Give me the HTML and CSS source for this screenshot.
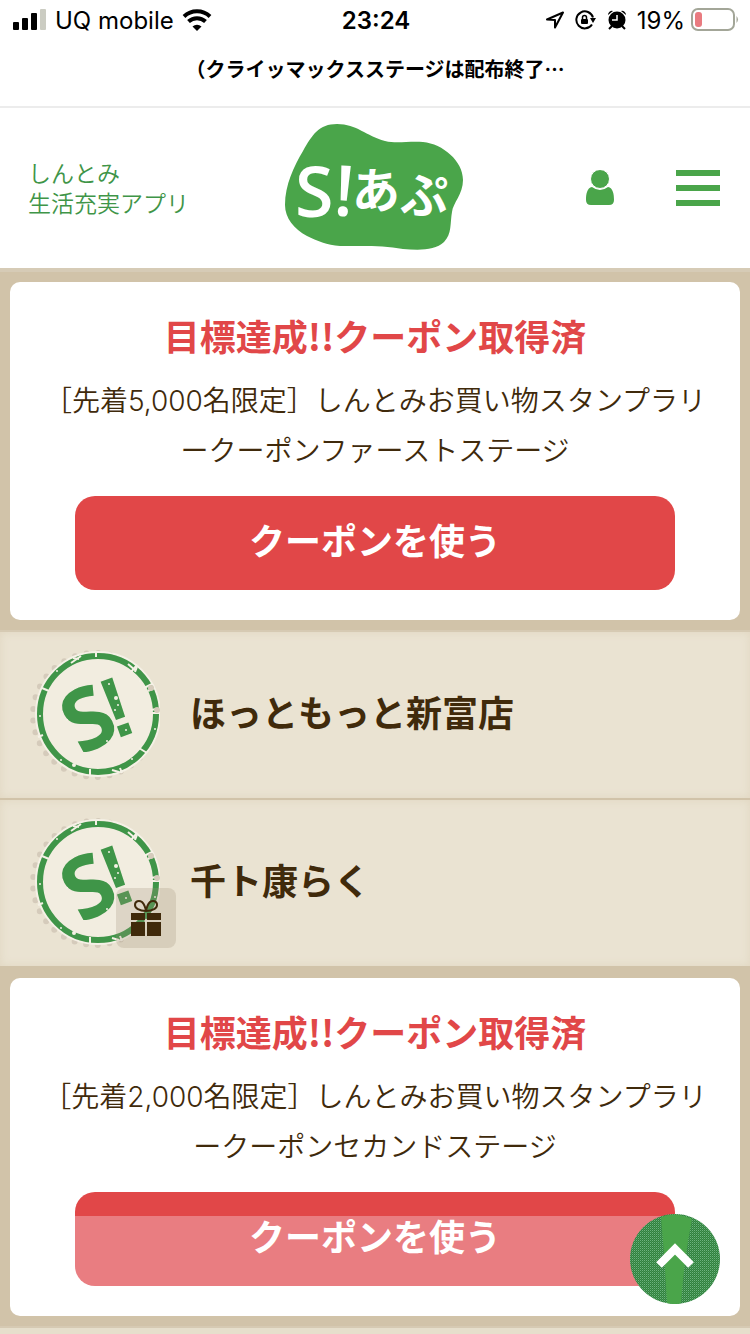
FILE: index.html
```html
<!DOCTYPE html>
<html lang="ja">
<head>
  <meta charset="UTF-8">
  <meta name="viewport" content="width=device-width, initial-scale=1.0">
  <title>S!あぷ スタンプラリー</title>
  <link rel="stylesheet" href="styles.css">
</head>
<body>
  <!-- Shared shapes -->
  <svg class="defs" width="0" height="0" aria-hidden="true">
    <symbol id="stamp" viewBox="0 0 130 130">
      <circle cx="66" cy="64" r="59" fill="#f5f1e6" opacity="0.7"/>
      <circle cx="65" cy="65" r="62" fill="none" stroke="#d5cbbb" stroke-width="6" stroke-linecap="round" stroke-dasharray="0 11.8"/>
      <circle cx="68" cy="64" r="62" fill="none" stroke="#f5f1e6" stroke-width="2"/>
      <circle cx="68" cy="64" r="58" fill="none" stroke="#3f9548" stroke-width="6"/>
      <!-- worn spots in the ring -->
      <g fill="none" stroke="#f5f1e6" stroke-width="2">
        <path d="M114 38l8-4M118 41l6-3M122 63h8M126 59l-5 1M12 38l7 3M109 98l8 5M41 13l10-7M43 8l6 1M98 14l8 7M101 22l6-7M107 17l-2 5M60 119v6M82 120l7 2M90 118l2 5M66 3v4M8 87l5-2"/>
      </g>
      <g fill="#f5f1e6">
        <circle cx="10" cy="66" r="1"/><circle cx="31" cy="110" r="1"/><circle cx="44" cy="115" r="2"/><circle cx="110" cy="31" r="1"/><circle cx="27" cy="21" r="1"/><circle cx="102" cy="109" r="1"/><circle cx="125" cy="79" r="1"/>
      </g>
      <circle cx="121" cy="38" r="3" fill="#d5cbbb"/>
      <circle cx="127" cy="60" r="3" fill="#d5cbbb"/>
      <g class="stamp-text">
        <text class="stamp-s" x="0" y="30" transform="translate(58 69) rotate(-28)">S</text>
        <text class="stamp-mark" x="0" y="31" transform="translate(86 56) rotate(-20)">!</text>
      </g>
      <g fill="#f5f1e6">
        <circle cx="86" cy="48" r="2"/><circle cx="88" cy="55" r="1"/><circle cx="85" cy="60" r="1"/><circle cx="79" cy="34" r="1"/><circle cx="37" cy="70" r="1"/><circle cx="77" cy="91" r="1"/><circle cx="96" cy="80" r="1"/>
      </g>
    </symbol>
  </svg>

  <div class="status-bar">
    <div class="status-left">
      <svg width="34" height="22" viewBox="0 0 34 22" aria-hidden="true">
        <rect x="0" y="13" width="6" height="8" rx="1"/>
        <rect x="9" y="9" width="6" height="12" rx="1"/>
        <rect x="18" y="4" width="6" height="17" rx="1"/>
        <rect x="27" y="0" width="6" height="21" rx="1" fill="#cbccc2"/>
      </svg>
      <span>UQ mobile</span>
      <svg width="30" height="22" viewBox="0 0 30 22" aria-hidden="true">
        <path d="M2 7.5a19 19 0 0 1 26 0M6.500 12.500a12.500 12.500 0 0 1 17 0" fill="none" stroke="#000" stroke-width="4"/>
        <path d="M10.500 17.500a7 7 0 0 1 9 0L15 22z"/>
      </svg>
    </div>
    <span class="status-time">23:24</span>
    <div class="status-right">
      <svg class="icon" width="20" height="18" viewBox="0 0 20 18" aria-hidden="true">
        <path d="M2 8.500L18 1.500L10 16.500V9z" fill="none" stroke="#000" stroke-width="2" stroke-linejoin="round"/>
      </svg>
      <svg class="icon" width="22" height="20" viewBox="0 0 22 20" aria-hidden="true">
        <path d="M17 14.500A8.500 8.500 0 1 1 18 7.500" fill="none" stroke="#000" stroke-width="2"/>
        <path d="M15 8h6l-3 5z"/>
        <rect x="6" y="9" width="7" height="5" rx="1"/>
        <path d="M7.500 9V7.500a2 2 0 0 1 4 0V9" fill="none" stroke="#000" stroke-width="1.500"/>
      </svg>
      <svg class="icon" width="20" height="20" viewBox="0 0 20 20" aria-hidden="true">
        <circle cx="10" cy="10" r="8.500"/>
        <path d="M1 5a4 4 0 0 1 5-4zM19 5a4 4 0 0 0-5-4z"/>
        <path d="M5 16l-3 3M15 16l3 3" stroke="#000" stroke-width="2"/>
        <path d="M10 5v5H5" fill="none" stroke="#fff" stroke-width="1.500"/>
      </svg>
      <span>19%</span>
      <svg width="48" height="24" viewBox="0 0 48 24" aria-hidden="true">
        <rect x="1" y="1" width="42" height="21" rx="6" fill="none" stroke="#a3a698" stroke-width="2"/>
        <rect x="4" y="4" width="7" height="15" rx="3" fill="#e97b80"/>
        <path d="M45.500 8q3 3.500 0 7z" fill="#a3a698"/>
      </svg>
    </div>
  </div>

  <p class="page-title">（クライッマックスステージは配布終了…</p>

  <header class="site-header">
    <p class="tagline">しんとみ<br>生活充実アプリ</p>
    <a class="logo" href="#" aria-label="S!あぷ">
      <svg width="178" height="126" viewBox="0 0 178 126">
        <path fill="#4aa54a" d="M52 0C72 0 81 12 100 17C112 20 122 17 138 18C158 20 178 37 178 56C178 70 168 79 167 88C165 99 167 110 159 118C150 127 133 126 118 125C98 121 76 122 55 122C42 121 32 117 22 112C9 105 0 94 0 81C0 61 9 42 18 27C27 11 34 0 52 0z"/>
        <g class="logo-text">
          <text class="logo-latin" x="10" y="93">S</text>
          <text class="logo-latin" x="0" y="0" transform="translate(48 91) rotate(4)">!</text>
          <text class="logo-kana" x="67" y="84">あ</text>
          <text class="logo-kana" x="115" y="89">ぷ</text>
        </g>
      </svg>
    </a>
    <nav class="header-nav">
      <a href="#" aria-label="マイページ">
        <svg width="30" height="36" viewBox="0 0 30 36">
          <path fill="#4aa54a" d="M7 17C2 18 1 24 1 30Q1 35 6 35H24Q29 35 29 30C29 24 28 18 23 17Q15 23 7 17z"/>
          <circle cx="15" cy="9" r="9.500" fill="#4aa54a" stroke="#fff"/>
        </svg>
      </a>
      <button class="menu-btn" type="button" aria-label="メニュー">
        <span></span><span></span><span></span>
      </button>
    </nav>
  </header>

  <main>
    <section class="coupon coupon-first">
      <div class="card">
        <h2>目標達成!!クーポン取得済</h2>
        <p>［先着5,000名限定］しんとみお買い物スタンプラリークーポンファーストステージ</p>
        <button class="coupon-btn" type="button">クーポンを使う</button>
      </div>
    </section>

    <ul class="shops">
      <li>
        <div class="stamp">
          <svg width="130" height="130" aria-hidden="true"><use href="#stamp"/></svg>
        </div>
        <h3>ほっともっと新富店</h3>
      </li>
      <li>
        <div class="stamp">
          <svg width="130" height="130" aria-hidden="true"><use href="#stamp"/></svg>
          <span class="gift">
            <svg width="30" height="38" viewBox="0 0 30 38" aria-hidden="true">
              <path fill="#402a0b" d="M0 14h14v7H0zM16 14h14v7H16zM0 23h14v14H0zM16 23h14v14H16z"/>
              <path fill="none" stroke="#402a0b" stroke-width="2" d="M15 12C8 12 4 9 4 6C4 2 8 1 11 3Q14 6 15 12Q16 6 19 3C22 1 26 2 26 6C26 9 22 12 15 12z"/>
            </svg>
          </span>
        </div>
        <h3>千ト康らく</h3>
      </li>
    </ul>

    <section class="coupon">
      <div class="card">
        <h2>目標達成!!クーポン取得済</h2>
        <p>［先着2,000名限定］しんとみお買い物スタンプラリークーポンセカンドステージ</p>
        <button class="coupon-btn coupon-btn-faded" type="button">クーポンを使う</button>
      </div>
    </section>

    <div class="paper-end"></div>
  </main>

  <a class="page-top" href="#" aria-label="ページの先頭へ">
    <svg width="90" height="90" viewBox="0 0 90 90">
      <defs>
        <pattern id="weave" width="2" height="2" patternUnits="userSpaceOnUse">
          <rect width="2" height="2" fill="#2f7d42"/>
          <rect width="1" height="1" fill="#6db67a"/>
          <rect x="1" y="1" width="1" height="1" fill="#48994f"/>
        </pattern>
      </defs>
      <circle cx="45" cy="45" r="45" fill="url(#weave)"/>
      <path fill="#4aa54a" d="M31 3Q45-3 62 5Q54 45 51 89Q45 91 37 89Q35 45 31 3z"/>
      <path d="M29 51l16-16 16 16" fill="none" stroke="#fff" stroke-width="8"/>
    </svg>
  </a>
</body>
</html>
```
FILE: styles.css
```css
* {
  box-sizing: border-box;
}
body {
  display: flex;
  flex-direction: column;
  min-height: 100vh;
  margin: 0;
  background-color: #fff;
  color: #402a0b;
  font-family: "Noto Sans CJK JP", sans-serif;
}
h2, h3, p, ul {
  margin: 0;
  padding: 0;
}
svg {
  display: block;
}
button {
  border: none;
  font-family: inherit;
  cursor: pointer;
}
.defs {
  position: absolute;
}

/* Status bar */
.status-bar {
  display: grid;
  grid-template-columns: 1fr auto 1fr;
  align-items: center;
  height: 40px;
  padding: 0 11px 0 13px;
  color: #000;
  font-family: Inter, sans-serif;
  font-size: 24px;
}
.status-left, .status-right {
  display: flex;
  align-items: center;
  gap: 8px;
}
.status-right {
  justify-content: flex-end;
  gap: 6px;
}
.status-right .icon {
  margin-right: 4px;
}
.status-time {
  font-weight: 600;
}
.page-title {
  height: 68px;
  padding: 14px 16px 0;
  border-bottom: 2px solid #ececec;
  color: #000;
  font-size: 20px;
  font-weight: 700;
  line-height: 30px;
  text-align: center;
}

/* Header */
.site-header {
  display: grid;
  grid-template-columns: 1fr auto 1fr;
  align-items: center;
  padding: 16px 30px 18px 28px;
}
.tagline {
  color: #3f9548;
  font-size: 23px;
  font-weight: 350;
  line-height: 30px;
}
.logo-text {
  fill: #fff;
}
.logo-latin {
  font-family: "Open Sans", sans-serif;
  font-size: 70px;
  font-weight: 600;
}
.logo-kana {
  font-size: 48px;
  font-weight: 700;
}
.header-nav {
  display: flex;
  align-items: center;
  justify-content: flex-end;
  gap: 61px;
  padding-top: 2px;
}
.menu-btn {
  display: flex;
  flex-direction: column;
  gap: 9px;
  width: 44px;
  padding: 0;
  background: none;
}
.menu-btn span {
  height: 6px;
  background-color: #4aa54a;
}

/* Coupons */
main {
  display: flex;
  flex: 1;
  flex-direction: column;
}
.coupon {
  padding: 10px;
  border-bottom: 2px solid #d6cab3;
  background-color: #d1c3a9;
}
.coupon-first {
  border-top: 4px solid #d6cbb6;
}
.card {
  padding: 28px 30px 30px;
  border-radius: 10px;
  background-color: #fff;
  text-align: center;
}
.card h2 {
  margin-bottom: 16px;
  color: #e14748;
  font-size: 36px;
  line-height: 50px;
}
.card p {
  margin-bottom: 20px;
  font-family: Inter, "Noto Sans CJK JP", sans-serif;
  font-size: 28px;
  font-weight: 350;
  line-height: 50px;
}
.coupon-btn {
  width: 100%;
  max-width: 600px;
  height: 94px;
  padding: 0 0 8px;
  border-radius: 20px;
  background-color: #e14748;
  color: #fff;
  font-size: 36px;
  font-weight: 700;
}
.coupon-btn-faded {
  background-image: linear-gradient(#e14748 24px, #e97d81 24px);
}

/* Shops */
.shops {
  list-style: none;
}
.shops li {
  display: flex;
  align-items: center;
  gap: 30px;
  padding: 18px 30px;
  border-bottom: 2px solid #d1c3a9;
  background-color: #eae3d2;
  box-shadow: inset 0 0 10px #e0d6c0;
}
.shops h3 {
  padding-bottom: 8px;
  font-size: 36px;
  line-height: 50px;
}
.stamp {
  position: relative;
}
.stamp-text {
  fill: #3f9548;
  font-size: 86px;
  font-weight: 700;
  text-anchor: middle;
}
.stamp-s {
  font-family: "Open Sans", sans-serif;
}
.stamp-mark {
  font-family: "Liberation Sans", sans-serif;
}
.gift {
  position: absolute;
  right: -16px;
  bottom: 0;
  padding: 11px 15px;
  border-radius: 8px;
  background-color: rgba(160, 143, 120, 0.25);
}
.paper-end {
  flex: 1;
  background-color: #e6dfcc;
}

.page-top {
  position: fixed;
  right: 30px;
  bottom: 30px;
}
```
